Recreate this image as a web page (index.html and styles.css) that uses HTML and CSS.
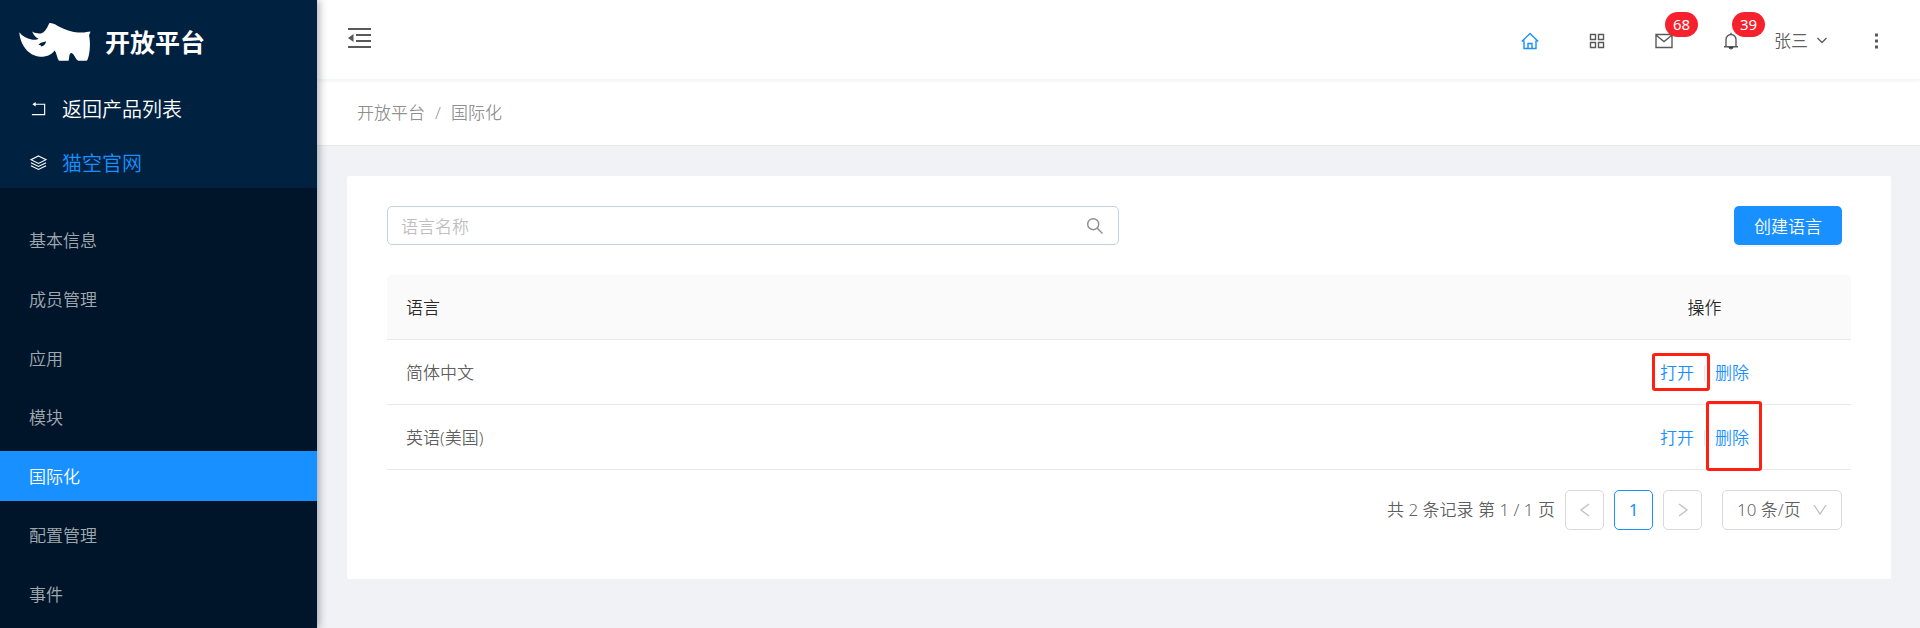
FILE: index.html
```html
<!DOCTYPE html>
<html lang="zh-CN">
<head>
    <meta charset="UTF-8">
    <meta name="viewport" content="width=device-width, initial-scale=1.0">
    <title>开放平台 - 国际化</title>
    <link rel="stylesheet" href="styles.css">
</head>
<body>

    <div class="layout">
        <aside class="sidebar">
            <div class="sidebar-top">
                <a class="logo" href="#">
                    <svg class="logo-img" viewBox="27 36 216 118" aria-hidden="true">
                        <path fill="#fff" fill-rule="evenodd" d="M27 67 C36 79 50 86 64 89 C72 91 80 90 85 87 C76 82 69 75 66 65 C75 71 88 72 95 70 C106 65 112 52 118 39 C128 37 138 45 150 51 C170 61 190 68 215 68 C226 68 235 66 242 65 C242 70 239 73 238 76 C243 100 241 132 233 151 Q232 153 229 153 L205 153 C197 151 194 131 184 130 C177 131 179 145 176 153 L147 153 C141 145 140 130 134 122 C124 136 108 141 91 141 C55 139 30 106 27 67 Z M84 106 C90 98 99 97 108 94 C106 104 101 108 92 110 C94 107 91 105 84 106 Z"/>
                    </svg>
                    <h1>开放平台</h1>
                </a>
                <a class="top-link" href="#">
                    <svg class="icon" viewBox="0 0 18 18" aria-hidden="true">
                        <path d="M4 4.5H15.500V15.500H2" fill="none" stroke="currentColor" stroke-width="1.2"/>
                        <path d="M2.500 4.500L6 2V7Z" fill="currentColor"/>
                    </svg>
                    <span>返回产品列表</span>
                </a>
                <a class="top-link current" href="#">
                    <svg class="icon" viewBox="0 0 18 18" aria-hidden="true">
                        <path d="M9 2L17 6L9 10L1 6ZM1 9.200L9 13.200L17 9.200M1 12.400L9 16.400L17 12.400" fill="none" stroke="currentColor" stroke-width="1.2"/>
                    </svg>
                    <span>猫空官网</span>
                </a>
            </div>
            <nav class="menu">
                <a href="#">基本信息</a>
                <a href="#">成员管理</a>
                <a href="#">应用</a>
                <a href="#">模块</a>
                <a href="#" class="active">国际化</a>
                <a href="#">配置管理</a>
                <a href="#">事件</a>
            </nav>
        </aside>

        <div class="main">
            <header class="header">
                <button class="fold" type="button" aria-label="收起菜单">
                    <svg viewBox="0 0 24 22" aria-hidden="true">
                        <path d="M0 2H23M8 8H23M8 14H23M0 20H23" fill="none" stroke="currentColor" stroke-width="2"/>
                        <path d="M0 11L5.500 7V15Z" fill="currentColor"/>
                    </svg>
                </button>
                <div class="tools">
                    <a href="#" class="tool home" aria-label="首页">
                        <svg class="icon" viewBox="0 0 18 18" aria-hidden="true">
                            <path d="M.8 9.500L9 1.500L17.200 9.500M3 8.500V16.500H15V8.500M7 16.500V11.500H11V16.500" fill="none" stroke="currentColor" stroke-width="1.4"/>
                        </svg>
                    </a>
                    <a href="#" class="tool" aria-label="应用">
                        <svg class="icon" viewBox="0 0 18 18" aria-hidden="true">
                            <path d="M2.500 2.500H7.500V7.500H2.500ZM10.500 2.500H15.500V7.500H10.500ZM2.500 10.500H7.500V15.500H2.500ZM10.500 10.500H15.500V15.500H10.500Z" fill="none" stroke="currentColor" stroke-width="1.4"/>
                        </svg>
                    </a>
                    <a href="#" class="tool" aria-label="消息">
                        <svg class="icon" viewBox="0 0 18 18" aria-hidden="true">
                            <path d="M1 2.500H17V15.500H1ZM1.500 3.500L9 9.500L16.500 3.500" fill="none" stroke="currentColor" stroke-width="1.4"/>
                        </svg>
                        <span class="badge">68</span>
                    </a>
                    <a href="#" class="tool" aria-label="通知">
                        <svg class="icon" viewBox="0 0 18 18" aria-hidden="true">
                            <path d="M9 .8V2.500M4 14.500V7.500A5 5 0 0 1 14 7.500V14.500M2 14.700H16" fill="none" stroke="currentColor" stroke-width="1.4"/>
                            <path d="M6.500 15H11.500A2.500 2.500 0 0 1 6.500 15Z" fill="currentColor"/>
                        </svg>
                        <span class="badge">39</span>
                    </a>
                    <button class="user" type="button">
                        <span>张三</span>
                        <svg viewBox="0 0 10 10" aria-hidden="true">
                            <path d="M.5 2L5 6.500L9.500 2" fill="none" stroke="currentColor" stroke-width="1.300"/>
                        </svg>
                    </button>
                    <button class="more" type="button" aria-label="更多">
                        <svg class="icon" viewBox="0 0 18 18" aria-hidden="true">
                            <path d="M8 1.500h3v3h-3zM8 7.500h3v3h-3zM8 13.500h3v3h-3z" fill="currentColor"/>
                        </svg>
                    </button>
                </div>
            </header>

            <div class="breadcrumb">
                <a href="#">开放平台</a>
                <span>/</span>
                <a href="#">国际化</a>
            </div>

            <main class="card">
                <div class="toolbar">
                    <div class="search">
                        <input type="text" placeholder="语言名称" aria-label="语言名称">
                        <svg class="icon" viewBox="0 0 18 18" aria-hidden="true">
                            <path d="M11.500 11.500L16.500 16.500M12.700 7.200A5.500 5.500 0 1 1 1.700 7.200A5.500 5.500 0 1 1 12.700 7.200Z" fill="none" stroke="currentColor" stroke-width="1.4"/>
                        </svg>
                    </div>
                    <button class="create" type="button">创建语言</button>
                </div>

                <table class="table">
                    <thead>
                        <tr>
                            <th>语言</th>
                            <th class="ops">操作</th>
                        </tr>
                    </thead>
                    <tbody>
                        <tr>
                            <td>简体中文</td>
                            <td class="ops">
                                <div class="links">
                                    <a href="#" class="mark mark-open">打开</a>
                                    <i class="divider"></i>
                                    <a href="#">删除</a>
                                </div>
                            </td>
                        </tr>
                        <tr>
                            <td>英语(美国)</td>
                            <td class="ops">
                                <div class="links">
                                    <a href="#">打开</a>
                                    <i class="divider"></i>
                                    <a href="#" class="mark mark-delete">删除</a>
                                </div>
                            </td>
                        </tr>
                    </tbody>
                </table>

                <div class="pagination">
                    <span class="total">共 2 条记录 第 1 / 1 页</span>
                    <button class="page" type="button" aria-label="上一页" disabled>
                        <svg viewBox="0 0 14 14" aria-hidden="true"><path d="M11 1L3 7L11 13" fill="none" stroke="currentColor" stroke-width="1.300"/></svg>
                    </button>
                    <button class="page current" type="button">1</button>
                    <button class="page" type="button" aria-label="下一页" disabled>
                        <svg viewBox="0 0 14 14" aria-hidden="true"><path d="M3 1L11 7L3 13" fill="none" stroke="currentColor" stroke-width="1.300"/></svg>
                    </button>
                    <div class="size">
                        <select aria-label="每页条数">
                            <option>10 条/页</option>
                            <option>20 条/页</option>
                        </select>
                        <svg viewBox="0 0 14 14" aria-hidden="true"><path d="M1 2L7 11L13 2" fill="none" stroke="currentColor" stroke-width="1.300"/></svg>
                    </div>
                </div>
            </main>
        </div>
    </div>

</body>
</html>
```
FILE: styles.css
```css
* {
    box-sizing: border-box;
}

body {
    margin: 0;
    font-family: "Noto Sans", "Noto Sans CJK SC", sans-serif;
    font-size: 17px;
    font-weight: 350;
    line-height: 26px;
    color: rgba(0, 0, 0, 0.65);
    background: #f0f2f5;
}

a {
    color: inherit;
    text-decoration: none;
}

button,
input,
select {
    font: inherit;
    color: inherit;
}

button {
    padding: 0;
    border: none;
    background: none;
    cursor: pointer;
}

svg {
    display: block;
}

.icon {
    width: 18px;
    height: 18px;
    flex: none;
}

.layout {
    display: flex;
    height: 100vh;
}

/* sidebar */
.sidebar {
    z-index: 2;
    width: 317px;
    flex: none;
    overflow: hidden;
    background: #001529;
    box-shadow: 2px 0 8px rgba(0, 21, 41, 0.35);
}

.sidebar-top {
    height: 188px;
    background: #002140;
    color: #fff;
}

.logo {
    display: flex;
    align-items: center;
    gap: 14px;
    height: 83px;
    padding-left: 19px;
}

.logo-img {
    width: 72px;
    height: 39px;
}

.logo h1 {
    margin: 0;
    font-size: 25px;
    font-weight: 700;
}

.top-link {
    display: flex;
    align-items: center;
    gap: 15px;
    height: 54px;
    padding-left: 30px;
    font-size: 20px;
}

.top-link .icon {
    width: 17px;
    height: 17px;
    margin-bottom: 4px;
}

.top-link.current span {
    color: #1890ff;
}

.menu {
    display: flex;
    flex-direction: column;
    gap: 9px;
    padding-top: 27px;
}

.menu a {
    padding: 2px 0 0 29px;
    line-height: 48px;
    color: rgba(255, 255, 255, 0.65);
}

.menu .active {
    background: #1890ff;
    color: #fff;
}

/* header */
.main {
    flex: 1;
    min-width: 0;
}

.header {
    position: relative;
    display: flex;
    align-items: center;
    justify-content: space-between;
    height: 79px;
    padding: 0 35px 0 31px;
    background: #fff;
    box-shadow: 0 1px 5px rgba(0, 21, 41, 0.08);
}

.fold {
    padding-bottom: 4px;
}

.fold svg {
    width: 24px;
    height: 22px;
}

.tools {
    display: flex;
    align-items: center;
    padding-top: 2px;
}

.tool {
    position: relative;
    margin-right: 49px;
}

.tool.home {
    color: #1890ff;
}

.badge {
    position: absolute;
    left: 10px;
    bottom: 13px;
    padding: 0 8px;
    border-radius: 13px;
    background: #f5222d;
    color: #fff;
    font-size: 15px;
    font-weight: 400;
    line-height: 25px;
}

.user {
    display: flex;
    align-items: center;
    gap: 9px;
    margin: 0 40px 0 -15px;
}

.user svg {
    width: 10px;
    height: 10px;
}

.breadcrumb {
    display: flex;
    gap: 10px;
    align-items: center;
    height: 67px;
    padding: 1px 0 0 40px;
    border-bottom: 1px solid #e8e8e8;
    background: #fff;
    color: rgba(0, 0, 0, 0.45);
}

/* content */
.card {
    margin: 30px 29px 0 30px;
    padding: 30px 40px 49px;
    border-radius: 2px;
    background: #fff;
}

.toolbar {
    display: flex;
    justify-content: space-between;
    margin-bottom: 30px;
}

.search {
    display: flex;
    align-items: center;
    width: 50%;
    height: 39px;
    padding: 0 14px 0 13px;
    border: 1px solid #c3d2e0;
    border-radius: 5px;
}

.search input {
    flex: 1;
    min-width: 0;
    padding: 2px 0 0;
    border: none;
    outline: none;
    background: none;
}

.search input::placeholder {
    color: #bfbfbf;
}

.search .icon {
    color: rgba(0, 0, 0, 0.45);
}

.create {
    height: 39px;
    margin-right: 9px;
    padding: 2px 20px 0;
    border-radius: 5px;
    background: #1890ff;
    color: #fff;
    box-shadow: 0 2px 0 rgba(0, 0, 0, 0.04);
}

.table {
    width: 100%;
    border-collapse: separate;
    border-spacing: 0;
}

.table th,
.table td {
    height: 65px;
    padding: 2px 19px 0;
    border-bottom: 1px solid #e8e8e8;
    text-align: left;
}

.table th {
    background: #fafafa;
    color: rgba(0, 0, 0, 0.85);
    font-weight: 350;
}

.table th:first-child {
    border-top-left-radius: 5px;
}

.table th:last-child {
    border-top-right-radius: 5px;
}

.table .ops {
    width: 20%;
    text-align: center;
}

.links {
    display: flex;
    align-items: center;
    justify-content: center;
    gap: 10px;
    color: #1890ff;
}

.divider {
    width: 1px;
    height: 16px;
    background: #e8e8e8;
}

/* red highlight boxes drawn over the links */
.mark {
    position: relative;
}

.mark::after {
    content: "";
    position: absolute;
    border: 3px solid #ff2012;
    border-radius: 3px;
}

.mark-open::after {
    inset: -7px -16px -5px -8px;
}

.mark-delete::after {
    inset: -24px -13px -20px -9px;
}

.pagination {
    display: flex;
    align-items: center;
    justify-content: flex-end;
    gap: 10px;
    padding: 20px 9px 0 0;
}

.page {
    display: flex;
    align-items: center;
    justify-content: center;
    width: 39px;
    height: 40px;
    border: 1px solid #d9d9d9;
    border-radius: 5px;
}

.page svg,
.size svg {
    width: 14px;
    height: 14px;
    color: #bfbfbf;
}

.page.current {
    border-color: #1890ff;
    color: #1890ff;
    font-weight: 400;
}

.size {
    display: flex;
    align-items: center;
    position: relative;
    margin-left: 10px;
}

.size select {
    width: 120px;
    height: 40px;
    padding: 0 14px;
    border: 1px solid #d9d9d9;
    border-radius: 5px;
    background: none;
    appearance: none;
}

.size svg {
    position: absolute;
    right: 15px;
    pointer-events: none;
}
```
